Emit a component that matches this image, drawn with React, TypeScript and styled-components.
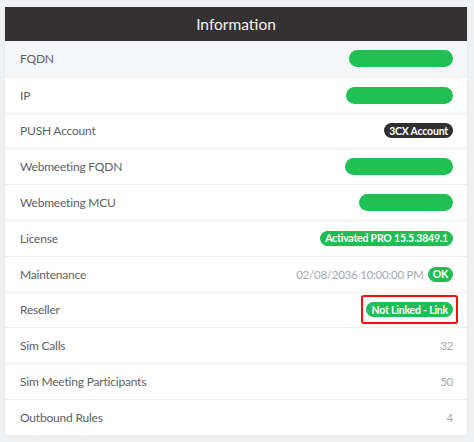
import React from "react";
import styled, { createGlobalStyle } from "styled-components";

const Global = createGlobalStyle`
  html, body { margin: 0; padding: 0; }
  body {
    background: #eef0f1;
    font-family: Lato, "Liberation Sans", sans-serif;
    -webkit-font-smoothing: antialiased;
  }
`;

const Page = styled.div`
  padding: 7px 7px 0 5px;
`;

const Panel = styled.section`
  background: #ffffff;
  box-shadow: 0 1px 2px rgba(0, 0, 0, 0.08);
`;

const Header = styled.header`
  height: 34px;
  background: #333131;
  color: #f2f2f2;
  display: flex;
  align-items: center;
  justify-content: center;
  font-size: 15.5px;
`;

const Row = styled.div<{ $shade?: boolean }>`
  height: 35.8px;
  box-sizing: border-box;
  display: flex;
  align-items: center;
  justify-content: space-between;
  padding: 0 14px 0 15px;
  border-top: 1px solid #f0f1f2;
  background: ${(p) => (p.$shade ? "#f4f6f7" : "#ffffff")};
  &:first-of-type { border-top: none; }
`;

const Label = styled.span`
  font-size: 12px;
  letter-spacing: -0.2px;
  color: #5d6164;
`;

const Value = styled.div`
  display: flex;
  align-items: center;
  gap: 4px;
`;

const Muted = styled.span`
  font-size: 11.5px;
  letter-spacing: -0.25px;
  color: #a6aaad;
`;

const Pill = styled.span<{ $dark?: boolean }>`
  display: inline-flex;
  align-items: center;
  height: 15px;
  padding: 0 5px;
  border-radius: 8px;
  background: ${(p) => (p.$dark ? "#2f2f31" : "#1fbe55")};
  color: #ffffff;
  font-size: 10.5px;
  letter-spacing: -0.2px;
  font-weight: 700;
  white-space: nowrap;
`;

const Redacted = styled.span`
  display: block;
  height: 17px;
  border-radius: 9px;
  background: #1fc155;
`;

const Highlight = styled.span`
  display: inline-flex;
  padding: 5px 3px;
  border: 2px solid #ff0b0b;
  border-radius: 3px;
  margin-right: -5px;
`;

export default function App() {
  return (
    <>
      <Global />
      <Page>
        <Panel>
          <Header>Information</Header>
          <Row $shade>
            <Label>FQDN</Label>
            <Redacted style={{ width: 104 }} />
          </Row>
          <Row>
            <Label>IP</Label>
            <Redacted style={{ width: 107 }} />
          </Row>
          <Row>
            <Label>PUSH Account</Label>
            <Pill $dark>3CX Account</Pill>
          </Row>
          <Row>
            <Label>Webmeeting FQDN</Label>
            <Redacted style={{ width: 108 }} />
          </Row>
          <Row>
            <Label>Webmeeting MCU</Label>
            <Redacted style={{ width: 94 }} />
          </Row>
          <Row>
            <Label>License</Label>
            <Pill>Activated PRO 15.5.3849.1</Pill>
          </Row>
          <Row>
            <Label>Maintenance</Label>
            <Value>
              <Muted>02/08/2036 10:00:00 PM</Muted>
              <Pill>OK</Pill>
            </Value>
          </Row>
          <Row>
            <Label>Reseller</Label>
            <Highlight>
              <Pill>Not Linked - Link</Pill>
            </Highlight>
          </Row>
          <Row>
            <Label>Sim Calls</Label>
            <Muted>32</Muted>
          </Row>
          <Row>
            <Label>Sim Meeting Participants</Label>
            <Muted>50</Muted>
          </Row>
          <Row>
            <Label>Outbound Rules</Label>
            <Muted>4</Muted>
          </Row>
        </Panel>
      </Page>
    </>
  );
}
